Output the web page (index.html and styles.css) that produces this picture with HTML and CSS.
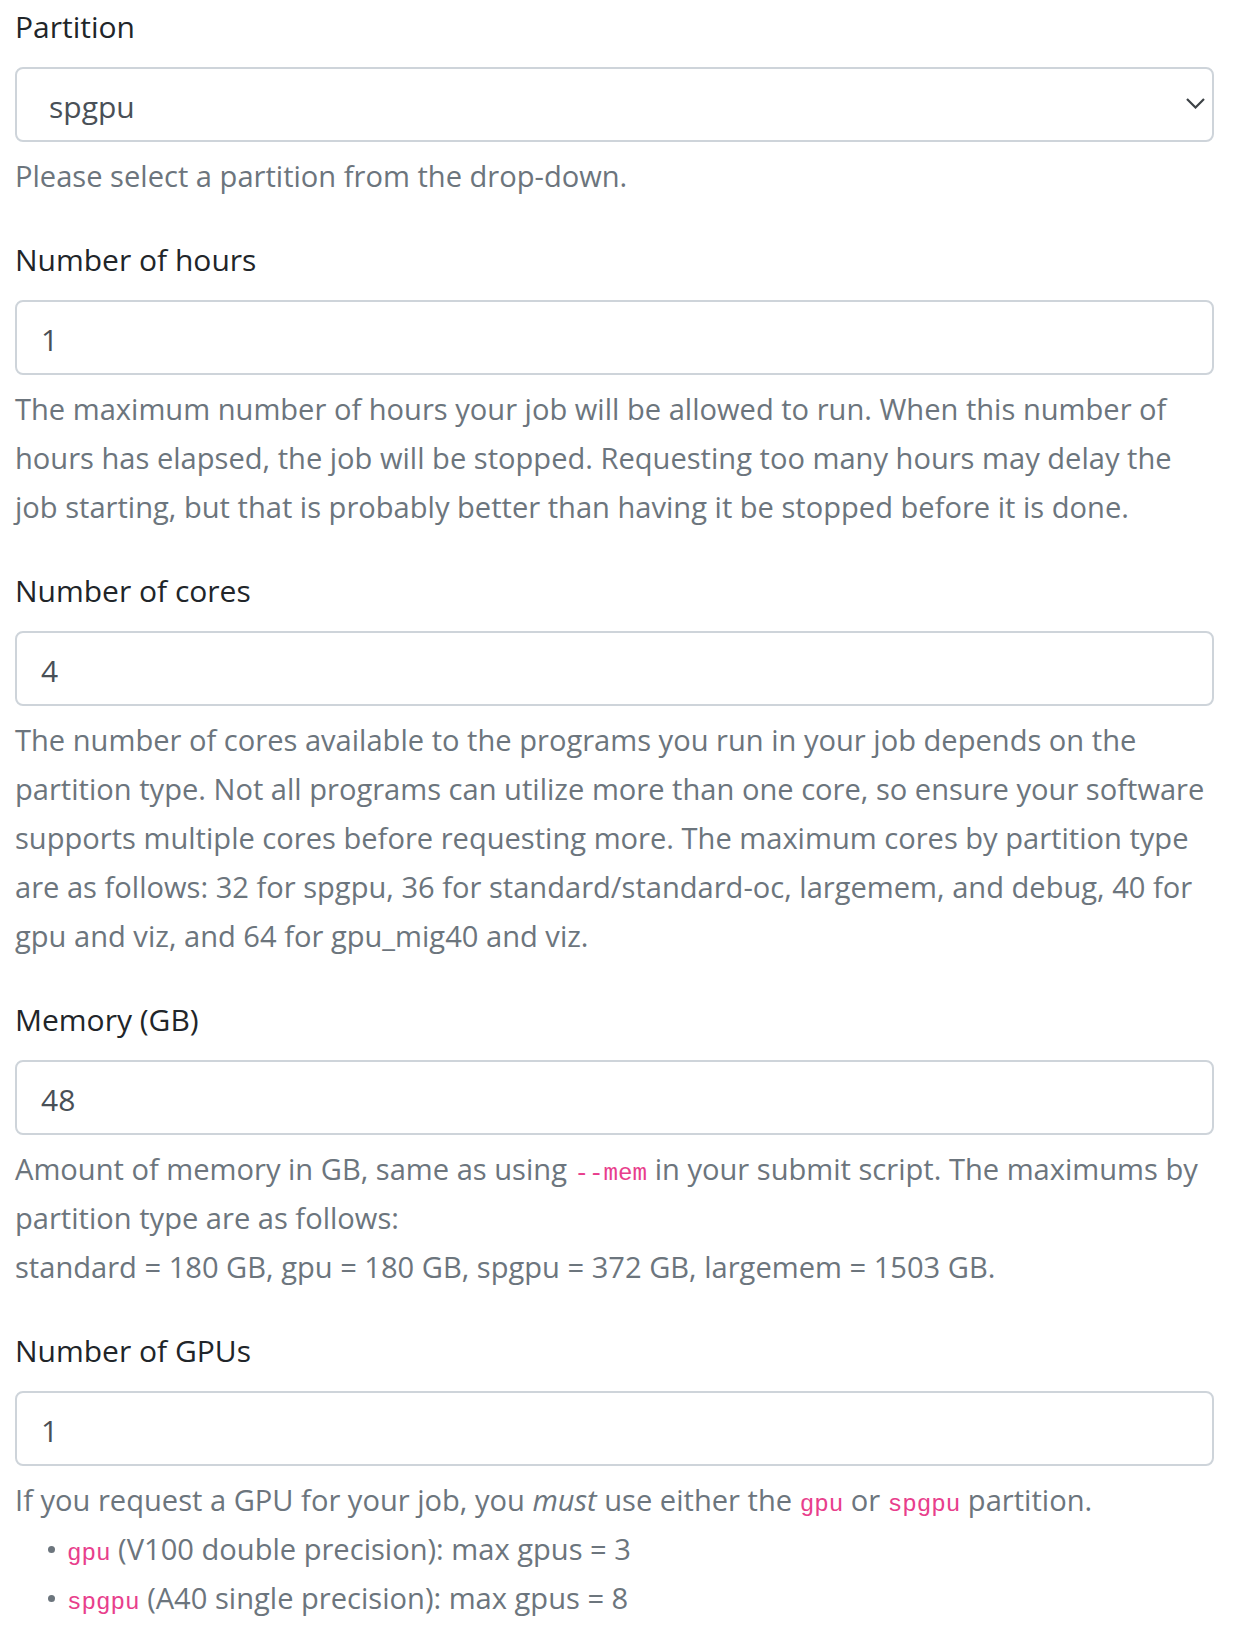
FILE: index.html
```html
<!DOCTYPE html>
<html lang="en">
<head>
<meta charset="utf-8">
<title>Job options</title>
<link rel="stylesheet" href="styles.css">
</head>
<body>
<form class="form">
  <div class="group">
    <label class="label" for="partition">Partition</label>
    <div class="select-wrap">
      <select id="partition" class="control select">
        <option>spgpu</option>
      </select>
      <svg class="chevron" width="19" height="11" viewBox="0 0 19 11" aria-hidden="true"><polyline points="1,1 9.5,9.5 18,1" fill="none" stroke="#3d4246" stroke-width="2.2"/></svg>
    </div>
    <div class="help">Please select a partition from the drop-down.</div>
  </div>

  <div class="group">
    <label class="label" for="hours">Number of hours</label>
    <input id="hours" class="control" type="text" value="1">
    <div class="help">The maximum number of hours your job will be allowed to run. When this number of hours has elapsed, the job will be stopped. Requesting too many hours may delay the job starting, but that is probably better than having it be stopped before it is done.</div>
  </div>

  <div class="group">
    <label class="label" for="cores">Number of cores</label>
    <input id="cores" class="control" type="text" value="4">
    <div class="help">The number of cores available to the programs you run in your job depends on the partition type. Not all programs can utilize more than one core, so ensure your software supports multiple cores before requesting more. The maximum cores by partition type are as follows: 32 for spgpu, 36 for standard/standard-oc, largemem, and debug, 40 for gpu and viz, and 64 for gpu_mig40 and viz.</div>
  </div>

  <div class="group">
    <label class="label" for="memory">Memory (GB)</label>
    <input id="memory" class="control" type="text" value="48">
    <div class="help">Amount of memory in GB, same as using <code class="code">--mem</code> in your submit script. The maximums by partition type are as follows:<br>standard = 180 GB, gpu = 180 GB, spgpu = 372 GB, largemem = 1503 GB.</div>
  </div>

  <div class="group">
    <label class="label" for="gpus">Number of GPUs</label>
    <input id="gpus" class="control" type="text" value="1">
    <div class="help">If you request a GPU for your job, you <em>must</em> use either the <code class="code">gpu</code> or <code class="code">spgpu</code> partition.
      <ul class="list">
        <li class="item"><code class="code">gpu</code> (V100 double precision): max gpus = 3</li>
        <li class="item"><code class="code">spgpu</code> (A40 single precision): max gpus = 8</li>
      </ul>
    </div>
  </div>
</form>
</body>
</html>
```

FILE: styles.css
```css
html, body {
  margin: 0;
  padding: 0;
  background: #ffffff;
}

body {
  font-family: "Open Sans", "Noto Sans", "Liberation Sans", sans-serif;
  color: #212529;
}

.form {
  padding: 3px 20px 0 15px;
}

.group {
  margin-bottom: 35px;
}

.label {
  display: block;
  font-size: 30px;
  line-height: 48px;
  margin-bottom: 16px;
  color: #212529;
}

.select-wrap {
  position: relative;
}

.control {
  display: block;
  width: 100%;
  height: 75px;
  box-sizing: border-box;
  margin: 0;
  padding: 4px 22px 0 24px;
  font-family: inherit;
  font-size: 30px;
  color: #495057;
  background: #ffffff;
  border: 2px solid #ced4da;
  border-radius: 8px;
  outline: none;
}

.select {
  -webkit-appearance: none;
  appearance: none;
  padding-left: 32px;
  padding-right: 60px;
}

.chevron {
  position: absolute;
  right: 9px;
  top: 31px;
  pointer-events: none;
}

.help {
  margin-top: 10px;
  font-size: 29.1px;
  line-height: 49px;
  color: #6c757d;
}

.code {
  font-family: "Liberation Mono", "DejaVu Sans Mono", monospace;
  font-size: 24.2px;
  line-height: 1;
  color: #e83e8c;
}

.list {
  margin: 0;
  padding-left: 52px;
  list-style: none;
}

.item::before {
  content: "";
  display: inline-block;
  width: 7px;
  height: 7px;
  border-radius: 50%;
  background: #6c757d;
  margin-left: -19px;
  margin-right: 12px;
  vertical-align: 7.5px;
}
```
